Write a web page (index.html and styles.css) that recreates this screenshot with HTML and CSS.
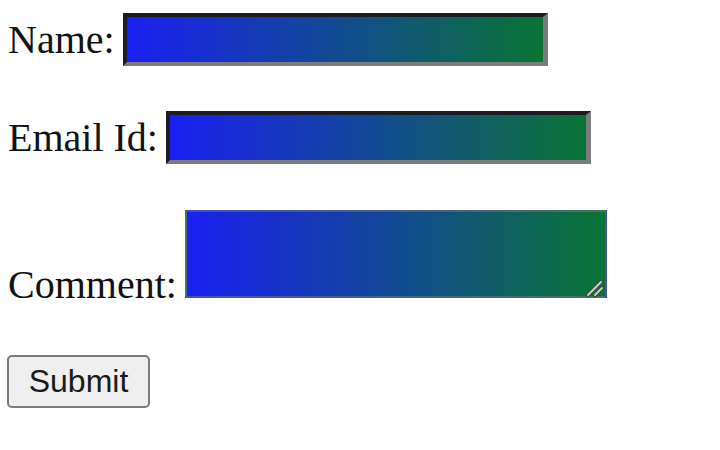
FILE: index.html
```html
<!DOCTYPE html>
<html>
<head>
<meta charset="utf-8">
<link rel="stylesheet" href="styles.css">
</head>
<body>
<form class="form">
  <div class="row row-name">
    <label class="lbl">Name:</label>
    <input class="field" type="text">
  </div>
  <div class="row row-email">
    <label class="lbl">Email Id:</label>
    <input class="field" type="text">
  </div>
  <div class="row row-comment">
    <label class="lbl lbl-bottom">Comment:</label>
    <span class="area-wrap">
      <textarea class="area"></textarea>
      <svg class="grip" width="18" height="18" viewBox="0 0 18 18">
        <path d="M2 16 L15 3" stroke="#3a4a40" stroke-width="4" stroke-linecap="round"/>
        <path d="M9 16 L16 9" stroke="#3a4a40" stroke-width="4" stroke-linecap="round"/>
        <path d="M2 16 L15 3" stroke="#c8d0c8" stroke-width="2" stroke-linecap="round"/>
        <path d="M9 16 L16 9" stroke="#c8d0c8" stroke-width="2" stroke-linecap="round"/>
      </svg>
    </span>
  </div>
  <div class="row row-submit">
    <button class="btn" type="button">Submit</button>
  </div>
</form>
</body>
</html>
```
FILE: styles.css
```css
html, body {
  margin: 0;
  padding: 0;
  background: #ffffff;
}
body {
  font-family: "Liberation Serif", "Times New Roman", serif;
  color: #111111;
}
.form {
  padding: 13px 0 0 8px;
}
.row {
  display: flex;
  align-items: center;
  gap: 8px;
}
.lbl {
  font-size: 40px;
  line-height: 46px;
}
.field {
  box-sizing: border-box;
  width: 425px;
  height: 53px;
  margin: 0;
  padding: 0;
  border-style: solid;
  border-width: 4px 5px 4px 4px;
  border-color: #1c1c24 #7c7c7c #7c7c7c #1c1c24;
  background: linear-gradient(to right, #1a20f2, #0a7434);
  outline: none;
}
.row-email {
  margin-top: 45px;
}
.row-comment {
  margin-top: 46px;
  align-items: flex-end;
}
.lbl-bottom {
  margin-bottom: -10px;
}
.area-wrap {
  position: relative;
  display: block;
  width: 422px;
  height: 88px;
}
.area {
  display: block;
  box-sizing: border-box;
  width: 422px;
  height: 88px;
  margin: 0;
  padding: 0;
  border: 2px solid rgba(110, 120, 130, 0.55);
  background: linear-gradient(to right, #1a20f2, #0a7434);
  resize: none;
  outline: none;
}
.grip {
  position: absolute;
  right: 3px;
  bottom: 1px;
}
.row-submit {
  margin-top: 57px;
}
.btn {
  box-sizing: border-box;
  width: 143px;
  height: 53px;
  margin: 0 0 0 -1px;
  padding: 0;
  border: 2px solid #7a7a7a;
  border-radius: 5px;
  background: #efefef;
  font-family: "Liberation Sans", Arial, sans-serif;
  font-size: 32px;
  color: #1a1a1a;
}
```
